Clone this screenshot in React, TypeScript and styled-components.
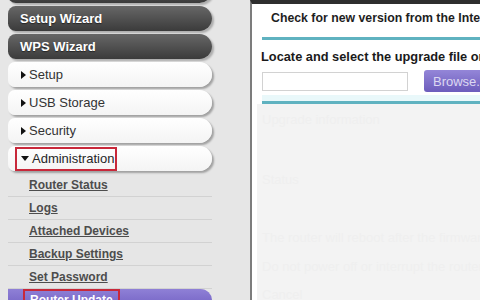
import styled, { createGlobalStyle } from 'styled-components';

const GlobalStyle = createGlobalStyle`
  html, body {
    margin: 0;
    padding: 0;
    background: #ffffff;
    font-family: "Liberation Sans", Arial, sans-serif;
  }
`;

const Page = styled.div`
  display: flex;
  width: 480px;
  height: 300px;
  overflow: hidden;
`;

const Sidebar = styled.nav`
  width: 250px;
  flex-shrink: 0;
  display: flex;
  flex-direction: column;
  gap: 3px;
  padding-left: 8px;
  box-sizing: border-box;
  background: #e6e6e6;
`;

const DarkButton = styled.div<{ $offset?: number }>`
  width: 204px;
  height: 25px;
  flex-shrink: 0;
  margin-top: ${p => p.$offset ?? 0}px;
  display: flex;
  align-items: center;
  padding-left: 12px;
  box-sizing: border-box;
  border-radius: 8px 13px 13px 8px;
  background: linear-gradient(#676767, #3b3b3b);
  box-shadow: 2px 2px 2px rgba(0, 0, 0, 0.25);
  color: #ffffff;
  font-size: 13px;
  font-weight: bold;
  text-shadow: 0 1px 1px rgba(0, 0, 0, 0.5);
`;

const LightButton = styled.div`
  width: 204px;
  height: 25px;
  flex-shrink: 0;
  display: flex;
  align-items: center;
  padding-left: 7px;
  box-sizing: border-box;
  border-radius: 7px 13px 13px 7px;
  background: linear-gradient(#ffffff, #f4f4f4);
  box-shadow: 2px 2px 2px rgba(0, 0, 0, 0.3);
  color: #333333;
  font-size: 13px;
`;

const Label = styled.span<{ $marked?: boolean }>`
  display: inline-flex;
  align-items: center;
  gap: 3px;
  height: 24px;
  box-sizing: border-box;
  padding: 0 1px 0 4px;
  border: 2px solid ${p => (p.$marked ? '#c8283a' : 'transparent')};
  color: ${p => (p.$marked ? '#262626' : '#333333')};
`;

const Arrow = styled.span<{ $open?: boolean }>`
  width: 0;
  height: 0;
  ${p =>
    p.$open
      ? `border-left: 4px solid transparent;
         border-right: 4px solid transparent;
         border-top: 5px solid #111;`
      : `border-top: 4px solid transparent;
         border-bottom: 4px solid transparent;
         border-left: 5px solid #111;`}
`;

const SubList = styled.ul`
  list-style: none;
  margin: 0;
  padding: 0;
  width: 204px;
`;

const SubItem = styled.li<{ $active?: boolean }>`
  height: 22px;
  display: flex;
  align-items: center;
  padding-left: ${p => (p.$active ? 15 : 21)}px;
  border-bottom: 1px solid #d2d2d2;
  border-radius: ${p => (p.$active ? '0 12px 12px 0' : '0')};
  background: ${p => (p.$active ? 'linear-gradient(#8f80d6, #6e5cc0)' : 'transparent')};
`;

const SubLink = styled.a<{ $active?: boolean }>`
  display: inline-flex;
  align-items: center;
  height: 22px;
  box-sizing: border-box;
  padding: 0 ${p => (p.$active ? '5px' : '0')};
  border: ${p => (p.$active ? '2px solid #c8283a' : 'none')};
  color: ${p => (p.$active ? '#ffffff' : '#4d4d4d')};
  font-size: 12px;
  font-weight: bold;
  text-decoration: underline;
`;

const Content = styled.main`
  flex: 1;
  display: flex;
  flex-direction: column;
  border-top: 4px solid #2e2e2e;
  border-left: 2px solid #7c7c7c;
  background: #ffffff;
  min-width: 0;
`;

const Header = styled.section`
  display: flex;
  flex-direction: column;
  white-space: nowrap;
`;

const CheckText = styled.div`
  margin: 6px 0 0 19px;
  line-height: 16px;
  font-size: 12.3px;
  font-weight: bold;
  color: #1e1e1e;
`;

const TealRule = styled.div<{ $top: number }>`
  margin: ${p => p.$top}px 0 0 10px;
  height: 3px;
  background: #5fb2c0;
`;

const LocateText = styled.div`
  margin: 9px 0 0 9px;
  line-height: 16px;
  font-size: 12.8px;
  font-weight: bold;
  color: #1a1a1a;
`;

const FileRow = styled.div`
  display: flex;
  align-items: flex-start;
  gap: 16px;
  margin: 5px 0 0 10px;
`;

const FileInput = styled.div`
  width: 146px;
  height: 19px;
  margin-top: 2px;
  flex-shrink: 0;
  border: 1px solid #d2d2d2;
  box-sizing: border-box;
  background: #ffffff;
`;

const BrowseButton = styled.button`
  width: 70px;
  height: 22px;
  flex-shrink: 0;
  padding: 0 0 0 9px;
  text-align: left;
  border: none;
  border-radius: 3px;
  background: linear-gradient(#9486d8, #6c5cbc);
  color: #dcd8f2;
  font-family: "Liberation Sans", Arial, sans-serif;
  font-size: 13px;
`;

const Glow = styled.div`
  margin: 3px 0 0 10px;
  height: 6px;
  background: #e9f8fa;
`;

const Lower = styled.section`
  flex: 1;
  margin-left: 5px;
  padding: 6px 0 0 5px;
  background: #f3f3f3;
  display: flex;
  flex-direction: column;
  white-space: nowrap;
  overflow: hidden;
`;

const Ghost = styled.div<{ $gap: number }>`
  margin-top: ${p => p.$gap}px;
  line-height: 16px;
  font-size: 13px;
  color: #efefef;
`;

const subLinks = ['Router Status', 'Logs', 'Attached Devices', 'Backup Settings', 'Set Password'];

export default function App() {
  return (
    <>
      <GlobalStyle />
      <Page>
        <Sidebar>
          <DarkButton $offset={-22}>Basic</DarkButton>
          <DarkButton>Setup Wizard</DarkButton>
          <DarkButton>WPS Wizard</DarkButton>
          <LightButton>
            <Label>
              <Arrow />
              Setup
            </Label>
          </LightButton>
          <LightButton>
            <Label>
              <Arrow />
              USB Storage
            </Label>
          </LightButton>
          <LightButton>
            <Label>
              <Arrow />
              Security
            </Label>
          </LightButton>
          <LightButton>
            <Label $marked>
              <Arrow $open />
              Administration
            </Label>
          </LightButton>
          <SubList>
            {subLinks.map(name => (
              <SubItem key={name}>
                <SubLink>{name}</SubLink>
              </SubItem>
            ))}
            <SubItem $active>
              <SubLink $active>Router Update</SubLink>
            </SubItem>
          </SubList>
        </Sidebar>
        <Content>
          <Header>
            <CheckText>Check for new version from the Internet</CheckText>
            <TealRule $top={11} />
            <LocateText>Locate and select the upgrade file on your hard disk:</LocateText>
            <FileRow>
              <FileInput />
              <BrowseButton>Browse...</BrowseButton>
            </FileRow>
            <Glow />
            <TealRule $top={0} />
          </Header>
          <Lower>
            <Ghost $gap={2}>Upgrade information</Ghost>
            <Ghost $gap={44}>Status</Ghost>
            <Ghost $gap={42}>The router will reboot after the firmware is loaded, please wait</Ghost>
            <Ghost $gap={13}>Do not power off or interrupt the router during upgrade process</Ghost>
            <Ghost $gap={12}>Cancel</Ghost>
          </Lower>
        </Content>
      </Page>
    </>
  );
}
